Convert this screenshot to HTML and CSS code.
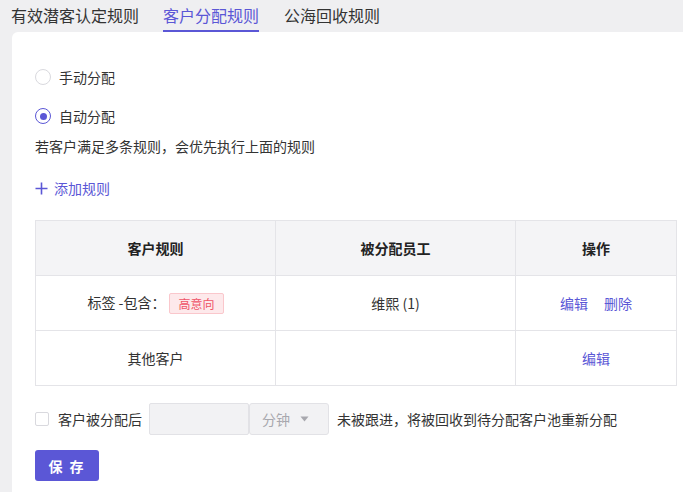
FILE: index.html
```html
<!DOCTYPE html>
<html lang="zh">
<head>
<meta charset="utf-8">
<link rel="stylesheet" href="styles.css">
</head>
<body>
<div class="page">
  <nav class="tabs">
    <div class="tab">有效潜客认定规则</div>
    <div class="tab active">客户分配规则</div>
    <div class="tab">公海回收规则</div>
  </nav>
  <main class="card">
    <label class="radio-row first"><span class="radio"></span><span>手动分配</span></label>
    <label class="radio-row second"><span class="radio checked"></span><span>自动分配</span></label>
    <p class="desc">若客户满足多条规则，会优先执行上面的规则</p>
    <div class="add">
      <svg width="13" height="13" viewBox="0 0 13 13"><path d="M6.5 0.5v12M0.5 6.5h12" stroke="#5b57d6" stroke-width="1.6" fill="none"/></svg>
      <span>添加规则</span>
    </div>
    <table class="rules">
      <colgroup><col class="c1"><col class="c2"><col class="c3"></colgroup>
      <thead>
        <tr><th>客户规则</th><th>被分配员工</th><th>操作</th></tr>
      </thead>
      <tbody>
        <tr>
          <td>标签 -包含：<span class="tag">高意向</span></td>
          <td>维熙 (1)</td>
          <td><a class="link">编辑</a><a class="link gap">删除</a></td>
        </tr>
        <tr>
          <td>其他客户</td>
          <td></td>
          <td><a class="link">编辑</a></td>
        </tr>
      </tbody>
    </table>
    <div class="recycle">
      <span class="checkbox"></span>
      <span class="label">客户被分配后</span>
      <span class="input"></span>
      <span class="select">分钟<svg width="9" height="6" viewBox="0 0 9 6"><path d="M0.5 0.5h8L4.5 5.5z" fill="#a8a8ae"/></svg></span>
      <span class="label after">未被跟进，将被回收到待分配客户池重新分配</span>
    </div>
    <button class="save">保 存</button>
  </main>
</div>
</body>
</html>
```

FILE: styles.css
```css
* { box-sizing: border-box; }
html, body { margin: 0; padding: 0; }
body {
  background: #efeff1;
  font-family: "Noto Sans CJK SC", "Noto Sans", sans-serif;
  color: #333;
  width: 683px;
  height: 492px;
  overflow: hidden;
}
.page { padding-left: 12px; }
.tabs {
  display: flex;
  gap: 25px;
  height: 32px;
  margin-left: -1px;
}
.tab {
  font-size: 16px;
  line-height: 30px;
  height: 32px;
  color: #333;
  border-bottom: 2px solid transparent;
}
.tab.active {
  color: #5b57d6;
  border-bottom-color: #5b57d6;
  margin-left: -1px;
}
.card {
  background: #fff;
  border-top-left-radius: 6px;
  min-height: 460px;
  width: 700px;
  padding: 36px 0 0 23px;
  font-size: 14px;
}
.radio-row {
  display: flex;
  align-items: center;
  gap: 8px;
  height: 18px;
}
.radio-row.second { margin-top: 21px; }
.radio {
  width: 16px;
  height: 16px;
  border: 1px solid #d9d9de;
  border-radius: 50%;
  display: inline-block;
  position: relative;
}
.radio.checked { border-color: #5b57d6; }
.radio.checked::after {
  content: "";
  position: absolute;
  left: 3.5px; top: 3.5px;
  width: 7px; height: 7px;
  border-radius: 50%;
  background: #5b57d6;
}
.desc {
  margin: 11px 0 0;
  font-size: 14px;
  line-height: 20px;
}
.add {
  display: flex;
  align-items: center;
  gap: 6px;
  margin-top: 22px;
  color: #5b57d6;
  font-size: 14px;
  line-height: 20px;
}
.rules {
  margin-top: 22px;
  border-collapse: collapse;
  width: 641px;
  table-layout: fixed;
  font-size: 14px;
}
.rules col.c1, .rules col.c2 { width: 240px; }
.rules col.c3 { width: 161px; }
.rules th, .rules td {
  border: 1px solid #e4e4e8;
  height: 55px;
  text-align: center;
  padding: 0;
}
.rules th {
  background: #f4f4f6;
  font-weight: 600;
  color: #222;
}
.tag {
  display: inline-block;
  margin-left: 4px;
  padding: 0 8px;
  height: 21px;
  line-height: 19px;
  border: 1px solid #fac7cc;
  background: #fde9eb;
  color: #ef5468;
  border-radius: 2px;
  font-size: 12px;
  vertical-align: middle;
}
.link { color: #5b57d6; cursor: pointer; }
.link.gap { margin-left: 16px; }
.recycle {
  display: flex;
  align-items: center;
  margin-top: 16px;
  height: 33px;
}
.checkbox {
  width: 14px;
  height: 14px;
  border: 1px solid #d9d9de;
  border-radius: 2px;
  margin-right: 9px;
}
.label { font-size: 14px; }
.input {
  margin-left: 7px;
  width: 100px;
  height: 32px;
  background: #f2f2f4;
  border: 1px solid #e2e2e6;
  border-radius: 2px;
}
.select {
  width: 80px;
  height: 32px;
  background: #f2f2f4;
  border: 1px solid #e2e2e6;
  border-radius: 3px;
  display: flex;
  align-items: center;
  gap: 10px;
  padding-left: 12px;
  color: #a8a8ae;
  font-size: 14px;
}
.label.after { margin-left: 8px; }
.save {
  display: block;
  margin-top: 15px;
  width: 64px;
  height: 31px;
  border: none;
  border-radius: 3px;
  background: #5b57d6;
  color: #fff;
  font-family: inherit;
  font-size: 14px;
  font-weight: 600;
  letter-spacing: 2px;
}
```
